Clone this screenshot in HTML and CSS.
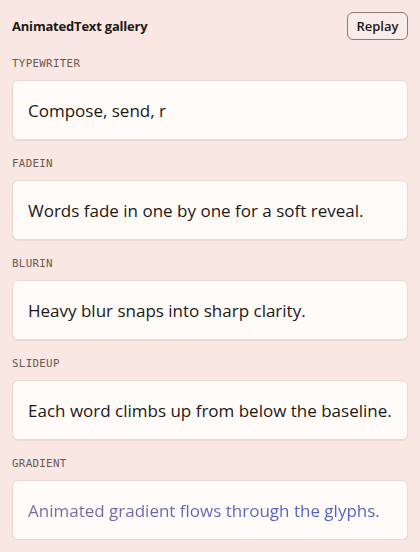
FILE: index.html
```html
<!DOCTYPE html>
<html>
<head>
<meta charset="utf-8">
<link rel="stylesheet" href="styles.css">
</head>
<body>
<div class="page">
  <header class="header">
    <h1 class="title">AnimatedText gallery</h1>
    <button class="replay">Replay</button>
  </header>
  <section class="item">
    <div class="label">TYPEWRITER</div>
    <div class="card"><span class="text">Compose, send, r</span></div>
  </section>
  <section class="item">
    <div class="label">FADEIN</div>
    <div class="card"><span class="text">Words fade in one by one for a soft reveal.</span></div>
  </section>
  <section class="item">
    <div class="label">BLURIN</div>
    <div class="card"><span class="text">Heavy blur snaps into sharp clarity.</span></div>
  </section>
  <section class="item">
    <div class="label">SLIDEUP</div>
    <div class="card"><span class="text">Each word climbs up from below the baseline.</span></div>
  </section>
  <section class="item">
    <div class="label">GRADIENT</div>
    <div class="card"><span class="text gradient">Animated gradient flows through the glyphs.</span></div>
  </section>
</div>
</body>
</html>
```

FILE: styles.css
```css
html, body {
  margin: 0;
  padding: 0;
  background: #f8e7e2;
}
body {
  font-family: "Open Sans", "Noto Sans", sans-serif;
  color: #1c1816;
}
.page {
  display: flex;
  flex-direction: column;
  padding: 12px 12px 0 12px;
  gap: 16px;
}
.header {
  display: flex;
  align-items: center;
  justify-content: space-between;
  height: 28px;
}
.title {
  margin: 0;
  font-size: 13px;
  font-weight: 700;
  letter-spacing: -0.2px;
}
.replay {
  font-family: inherit;
  font-size: 13px;
  font-weight: 600;
  color: #1c1816;
  background: #f9ebe7;
  border: 1px solid #8c7a76;
  border-radius: 6px;
  height: 28px;
  width: 61px;
  padding: 0;
}
.item {
  display: flex;
  flex-direction: column;
  gap: 8px;
}
.label {
  font-family: "DejaVu Sans Mono", "Liberation Mono", monospace;
  font-size: 10.8px;
  letter-spacing: 0.03em;
  color: #6b5a55;
  line-height: 16px;
}
.card {
  box-sizing: border-box;
  background: #fffbf9;
  border: 1px solid #ead8d3;
  border-radius: 6px;
  height: 60px;
  display: flex;
  align-items: center;
  padding: 0 15px;
  box-shadow: 0 1px 1px rgba(120, 80, 70, 0.08);
}
.text {
  font-size: 17px;
  color: #1c1816;
}
.gradient {
  background: linear-gradient(90deg, #7a6a96 0%, #5f64b6 50%, #4b5fcc 100%);
  -webkit-background-clip: text;
  background-clip: text;
  color: transparent;
}
```
